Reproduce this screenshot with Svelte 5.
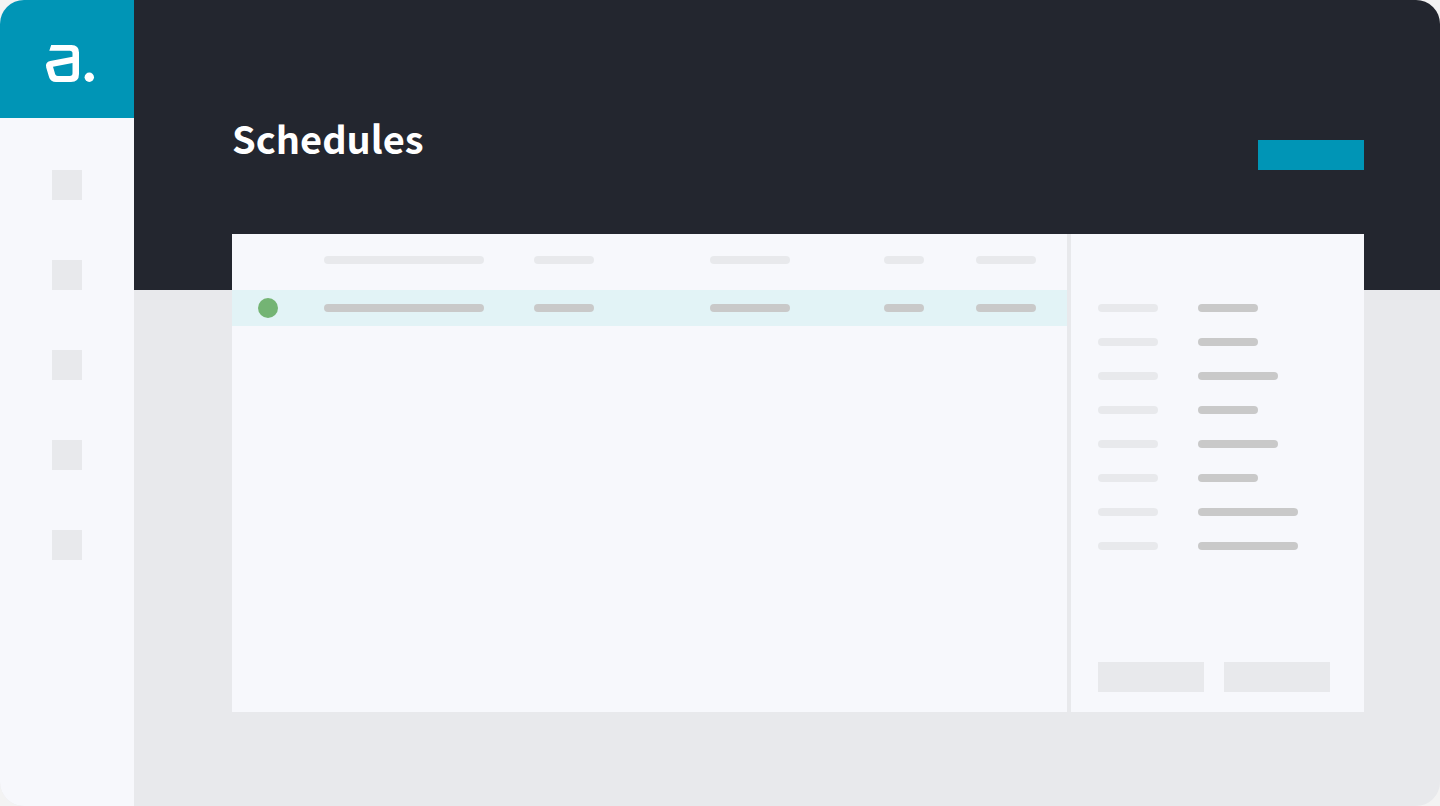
<script>
  const navItems = ['Home', 'Jobs', 'Schedules', 'Reports', 'Settings'];
  const columns = [
    { width: 210, bar: 160 },
    { width: 176, bar: 60 },
    { width: 174, bar: 80 },
    { width: 92, bar: 40 },
    { width: 91, bar: 60 }
  ];
  const details = [60, 60, 80, 60, 80, 60, 100, 100];
</script>

<div class="app">
  <aside class="sidebar">
    <a class="logo" href="#home" aria-label="Home">
      <svg viewBox="0 0 52 42" width="52" height="42" aria-hidden="true">
        <path
          fill="#fff"
          fill-rule="evenodd"
          d="M8.2 3H28.5Q36 3 36 10.5V32Q36 40 28 40H13Q7.6 40 6.1 35.2L3.2 25.4Q2 20.3 7.2 19.1L29.5 14.7V11.5Q29.5 8.8 26.8 8.8H6.3ZM29.5 20.9L10 24.8L12.2 32.2Q12.8 34 14.8 34H26.8Q29.5 34 29.5 31.3Z"
        />
        <circle cx="46.3" cy="35.3" r="4.7" fill="#fff" />
      </svg>
    </a>
    <nav>
      {#each navItems as item}
        <a class="nav-item" href={'#' + item.toLowerCase()} aria-label={item}></a>
      {/each}
    </nav>
  </aside>

  <main>
    <header>
      <h1>Schedules</h1>
      <button class="primary" type="button" aria-label="New schedule"></button>
    </header>

    <div class="panel">
      <section class="list">
        <table aria-label="Schedules">
          <colgroup>
            <col style:width="{(92 / 835) * 100}%" />
            {#each columns as c}
              <col style:width="{(c.width / 835) * 100}%" />
            {/each}
          </colgroup>
          <thead>
            <tr>
              <th></th>
              {#each columns as c}
                <th><span class="bar" style:width="{c.bar}px"></span></th>
              {/each}
            </tr>
          </thead>
          <tbody>
            <tr>
              <td><span class="status"></span></td>
              {#each columns as c}
                <td><span class="bar strong" style:width="{c.bar}px"></span></td>
              {/each}
            </tr>
          </tbody>
        </table>
      </section>

      <section class="details">
        <dl>
          {#each details as width}
            <div class="detail">
              <dt><span class="bar label"></span></dt>
              <dd><span class="bar strong" style:width="{width}px"></span></dd>
            </div>
          {/each}
        </dl>
        <div class="actions">
          <button type="button" aria-label="Edit"></button>
          <button type="button" aria-label="Delete"></button>
        </div>
      </section>
    </div>
  </main>
</div>

<style>
  :global(body) {
    margin: 0;
    background: #f3f3f3;
  }

  .app {
    display: flex;
    min-height: 100vh;
    border-radius: 24px;
    overflow: hidden;
    background: #e8e9ec;
    font-family: 'Noto Sans CJK SC', 'Noto Sans', sans-serif;
  }

  .sidebar {
    flex: 0 0 134px;
    background: #f7f8fc;
  }

  .logo {
    display: flex;
    align-items: center;
    justify-content: center;
    height: 118px;
    padding: 8px 0 0 4px;
    box-sizing: border-box;
    background: #0095b6;
  }

  nav {
    display: flex;
    flex-direction: column;
    align-items: center;
    gap: 60px;
    padding-top: 52px;
  }

  .nav-item {
    width: 30px;
    height: 30px;
    background: #e8e9ec;
  }

  main {
    flex: 1;
    min-width: 0;
    display: flex;
    flex-direction: column;
  }

  header {
    display: flex;
    justify-content: space-between;
    align-items: flex-end;
    height: 290px;
    padding: 0 76px 120px 98px;
    box-sizing: border-box;
    background: #23262f;
  }

  h1 {
    margin: 0;
    color: #fff;
    font-size: 38px;
    line-height: 64px;
    font-weight: 700;
  }

  button {
    width: 106px;
    height: 30px;
    padding: 0;
    border: 0;
    background: #e8e9ec;
    cursor: pointer;
  }

  .primary {
    background: #0095b6;
  }

  .panel {
    flex: 1;
    display: flex;
    gap: 4px;
    margin: -56px 76px 94px 98px;
    background: #e8e9ec;
  }

  .list {
    flex: 1;
    min-width: 0;
    background: #f7f8fc;
  }

  table {
    width: 100%;
    table-layout: fixed;
    border-collapse: collapse;
  }

  th,
  td {
    padding: 0;
    text-align: left;
  }

  th {
    height: 56px;
    padding-top: 22px;
    box-sizing: border-box;
    vertical-align: top;
  }

  td {
    height: 36px;
    vertical-align: middle;
  }

  tbody tr {
    background: #e2f3f6;
  }

  .bar {
    display: block;
    height: 8px;
    border-radius: 4px;
    background: #e8e9ec;
  }

  .bar.strong {
    background: #c9c9c9;
  }

  .bar.label {
    width: 60px;
  }

  .status {
    display: block;
    width: 20px;
    height: 20px;
    margin-left: 26px;
    border-radius: 50%;
    background: #74b474;
  }

  .details {
    flex: 0 0 293px;
    display: flex;
    flex-direction: column;
    justify-content: space-between;
    padding: 70px 34px 20px 27px;
    box-sizing: border-box;
    background: #f7f8fc;
  }

  dl {
    display: flex;
    flex-direction: column;
    gap: 26px;
    margin: 0;
  }

  .detail {
    display: flex;
    gap: 40px;
  }

  dd {
    margin: 0;
  }

  .actions {
    display: flex;
    gap: 20px;
  }
</style>
